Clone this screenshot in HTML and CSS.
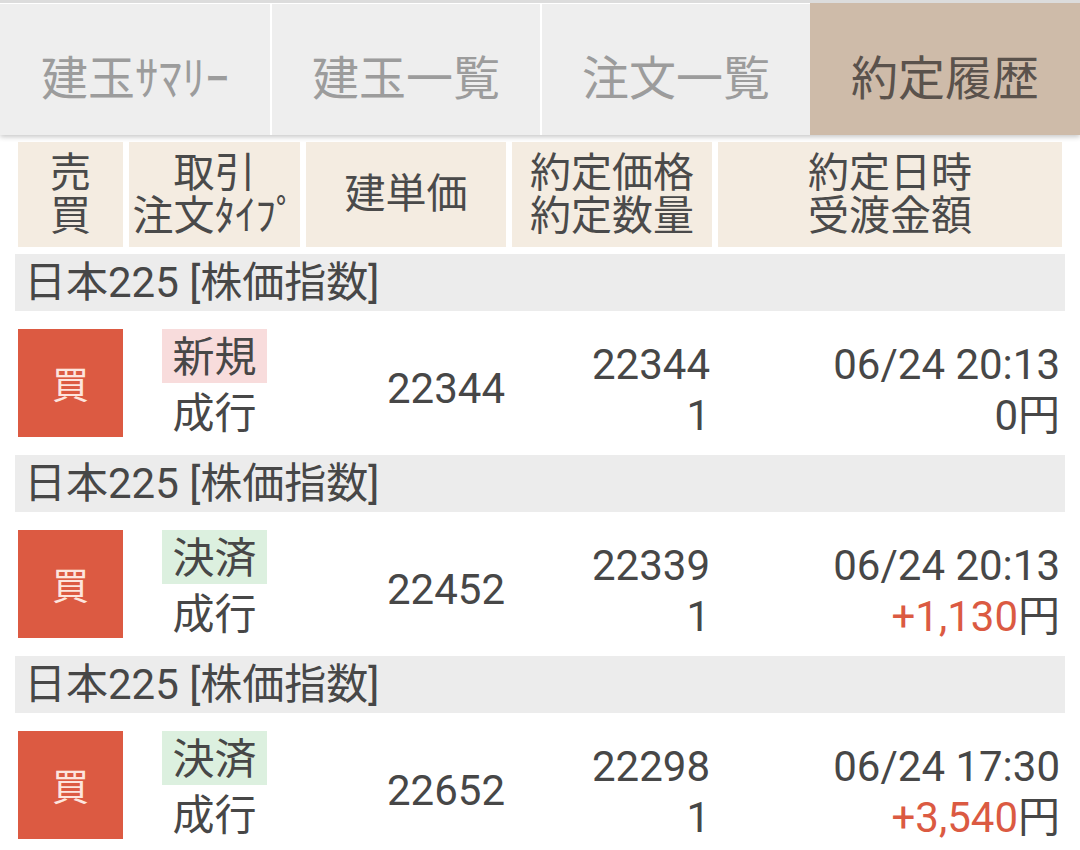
FILE: index.html
```html
<!DOCTYPE html>
<html lang="ja">
<head>
<meta charset="utf-8">
<title>約定履歴</title>
<link rel="stylesheet" href="styles.css">
</head>
<body>
<div class="tabs">
  <div class="tab">建玉ｻﾏﾘｰ</div>
  <div class="tab sep">建玉一覧</div>
  <div class="tab sep">注文一覧</div>
  <div class="tab active">約定履歴</div>
</div>

<div class="head">
  <div class="hcell">売<br>買</div>
  <div class="hcell">取引<br>注文ﾀｲﾌﾟ</div>
  <div class="hcell">建単価</div>
  <div class="hcell">約定価格<br>約定数量</div>
  <div class="hcell">約定日時<br>受渡金額</div>
</div>

<div class="section">日本225 [株価指数]</div>
<div class="row">
  <div class="side">買</div>
  <div class="type"><span class="badge new">新規</span><span class="line">成行</span></div>
  <div class="price">22344</div>
  <div class="exec"><span class="line">22344</span><span class="line">1</span></div>
  <div class="settle"><span class="line">06/24 20:13</span><span class="line">0円</span></div>
</div>

<div class="section">日本225 [株価指数]</div>
<div class="row">
  <div class="side">買</div>
  <div class="type"><span class="badge close">決済</span><span class="line">成行</span></div>
  <div class="price">22452</div>
  <div class="exec"><span class="line">22339</span><span class="line">1</span></div>
  <div class="settle"><span class="line">06/24 20:13</span><span class="line"><span class="gain">+1,130</span>円</span></div>
</div>

<div class="section">日本225 [株価指数]</div>
<div class="row">
  <div class="side">買</div>
  <div class="type"><span class="badge close">決済</span><span class="line">成行</span></div>
  <div class="price">22652</div>
  <div class="exec"><span class="line">22298</span><span class="line">1</span></div>
  <div class="settle"><span class="line">06/24 17:30</span><span class="line"><span class="gain">+3,540</span>円</span></div>
</div>
</body>
</html>
```

FILE: styles.css
```css
html, body {
  margin: 0;
  padding: 0;
  background: #ffffff;
}
body {
  font-family: Roboto, "Noto Sans CJK JP", sans-serif;
  color: #474747;
  width: 1080px;
  overflow: hidden;
}

.tabs {
  display: grid;
  grid-template-columns: repeat(4, 1fr);
  background: #dcdcdc;
  padding-top: 3px;
  box-shadow: 0 2px 5px rgba(0, 0, 0, 0.22);
  position: relative;
  z-index: 1;
}
.tab {
  height: 132px;
  box-sizing: border-box;
  background: #eeeeee;
  border-top: 1px solid #ffffff;
  color: #9c9c9c;
  font-size: 47px;
  display: flex;
  align-items: center;
  justify-content: center;
  padding-top: 10px;
}
.tab.sep {
  border-left: 2px solid #ffffff;
}
.tab.active {
  background: #cebba9;
  color: #5a524c;
  border-top-color: #cebba9;
}

.head {
  display: grid;
  grid-template-columns: 105px 171px 200px 200px 344px;
  column-gap: 6px;
  margin: 7px 18px 0;
}
.hcell {
  background: #f4ece1;
  height: 105px;
  display: flex;
  align-items: center;
  justify-content: center;
  text-align: center;
  font-size: 41px;
  line-height: 43px;
  color: #4a4a4a;
}

.section {
  margin: 7px 15px 0;
  height: 57px;
  background: #ececec;
  font-size: 42px;
  line-height: 57px;
  padding-left: 9px;
  color: #474747;
  white-space: nowrap;
}
.row + .section {
  margin-top: 0;
}

.row {
  display: grid;
  grid-template-columns: 105px 171px 200px 200px 344px;
  column-gap: 6px;
  padding: 18px 18px;
  height: 108px;
  font-size: 42px;
}
.side {
  background: #dc5a42;
  color: #fde5de;
  font-size: 37px;
  display: flex;
  align-items: center;
  justify-content: center;
}
.type {
  display: flex;
  flex-direction: column;
  align-items: center;
}
.line {
  display: block;
  height: 54px;
  line-height: 54px;
  padding-top: 4px;
  box-sizing: border-box;
  white-space: nowrap;
}
.badge {
  display: block;
  height: 54px;
  line-height: 54px;
  padding: 2px 10px 0;
  box-sizing: border-box;
}
.badge.new {
  background: #f8dcdc;
}
.badge.close {
  background: #dcf0df;
}
.price {
  align-self: center;
  text-align: right;
  padding-right: 1px;
  padding-top: 10px;
}
.exec,
.settle {
  text-align: right;
  padding-right: 2px;
}
.exec .line,
.settle .line {
  height: 57px;
  line-height: 57px;
  padding-top: 7px;
}
.exec .line + .line,
.settle .line + .line {
  height: 51px;
  line-height: 51px;
  padding-top: 4px;
}
.gain {
  color: #db5a42;
}
```
